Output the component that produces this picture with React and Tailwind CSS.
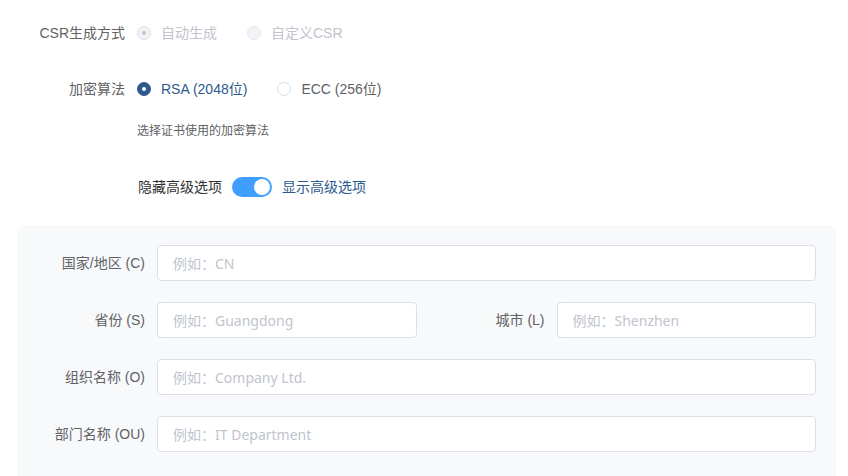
import React, { useState } from 'react';

const labelFont = { fontFamily: '"Liberation Sans", "Noto Sans CJK SC", sans-serif' };

function Radio({ checked, disabled, label, onClick }) {
  const ring = disabled
    ? checked
      ? 'border-[#dcdfe6] bg-[#f2f3f7]'
      : 'border-[#e4e7ed] bg-[#f2f3f7]'
    : checked
      ? 'border-[#2c5a8e] bg-[#2c5a8e]'
      : 'border-[#dcdfe6] bg-white';
  const dot = disabled ? 'bg-[#c0c4cc]' : 'bg-white';
  const text = disabled ? 'text-[#c0c4cc]' : checked ? 'text-[#2c5a8e]' : 'text-[#606266]';
  return (
    <label onClick={onClick} className={`mr-[30px] flex items-center ${disabled ? 'cursor-not-allowed' : 'cursor-pointer'}`}>
      <span className={`flex h-[14px] w-[14px] items-center justify-center rounded-full border ${ring}`}>
        {checked && <span className={`h-[4px] w-[4px] rounded-full ${dot}`} />}
      </span>
      <span className={`pl-[10px] text-[14px] ${text}`}>{label}</span>
    </label>
  );
}

function Field({ label, placeholder }) {
  return (
    <div className="flex h-[36px] min-w-0 flex-1 items-center">
      <div className="w-[120px] shrink-0 pr-[12px] text-right text-[14px] text-[#606266]" style={labelFont}>
        {label}
      </div>
      <input
        placeholder={placeholder}
        className="h-[36px] min-w-0 flex-1 rounded-[4px] border border-[#dcdfe6] bg-white px-[15px] text-[14px] text-[#606266] outline-none placeholder:text-[#c0c4cc]"
        style={{ fontFamily: '"Noto Sans", "Noto Sans CJK SC", sans-serif' }}
      />
    </div>
  );
}

export default function App() {
  const [algo, setAlgo] = useState('rsa');
  const [advanced, setAdvanced] = useState(true);

  return (
    <div className="min-h-[476px] bg-white pl-[17px] pr-[12px]" style={labelFont}>
      {/* CSR 方式 */}
      <div className="flex h-[40px] items-center pt-[13px] box-content">
        <div className="w-[120px] pr-[12px] text-right text-[14px] text-[#606266]">CSR生成方式</div>
        <Radio checked disabled label="自动生成" />
        <Radio disabled label="自定义CSR" />
      </div>

      {/* 加密算法 */}
      <div className="mt-[16px] flex h-[40px] items-center">
        <div className="w-[120px] pr-[12px] text-right text-[14px] text-[#606266]">加密算法</div>
        <Radio checked={algo === 'rsa'} label="RSA (2048位)" onClick={() => setAlgo('rsa')} />
        <Radio checked={algo === 'ecc'} label="ECC (256位)" onClick={() => setAlgo('ecc')} />
      </div>
      <div className="mt-[13px] pl-[120px] text-[12px] leading-[18px] text-[#606266]">选择证书使用的加密算法</div>

      {/* 高级选项开关 */}
      <div className="mt-[27px] flex h-[40px] items-center pl-[121px]">
        <span className="text-[14px] text-[#303133]">隐藏高级选项</span>
        <button
          onClick={() => setAdvanced(!advanced)}
          className={`mx-[10px] flex h-[20px] w-[40px] items-center rounded-full px-[2px] ${advanced ? 'justify-end bg-[#409eff]' : 'justify-start bg-[#dcdfe6]'}`}
        >
          <span className="h-[16px] w-[16px] rounded-full bg-white" />
        </button>
        <span className={`text-[14px] ${advanced ? 'text-[#2c5a8e]' : 'text-[#303133]'}`}>显示高级选项</span>
      </div>

      {/* 主题信息 */}
      {advanced && (
        <div className="mt-[18px] flex flex-col gap-[21px] rounded-t-[8px] bg-[#f8f9fb] px-[20px] pb-[30px] pt-[20px]">
          <Field label="国家/地区 (C)" placeholder="例如：CN" />
          <div className="flex gap-[20px]">
            <Field label="省份 (S)" placeholder="例如：Guangdong" />
            <Field label="城市 (L)" placeholder="例如：Shenzhen" />
          </div>
          <Field label="组织名称 (O)" placeholder="例如：Company Ltd." />
          <Field label="部门名称 (OU)" placeholder="例如：IT Department" />
        </div>
      )}
    </div>
  );
}
